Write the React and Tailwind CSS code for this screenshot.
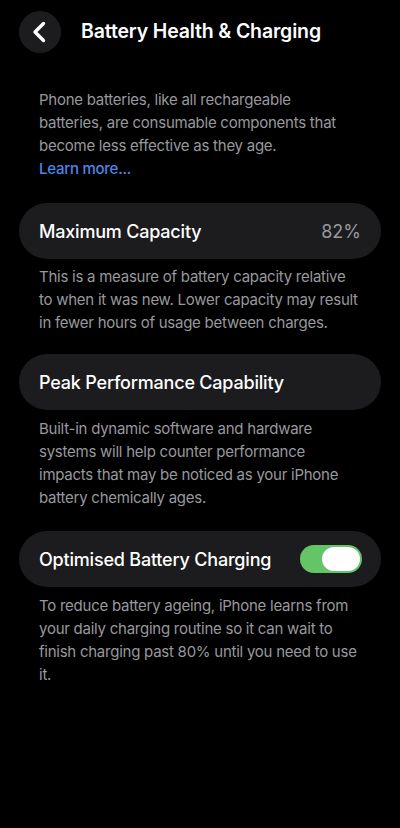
import React, { useState } from 'react';

function Toggle({ on, onChange }) {
  return (
    <button
      onClick={() => onChange(!on)}
      className={`w-[62px] h-[28px] rounded-full p-[2px] flex items-center ${on ? 'bg-[#65c466] justify-end' : 'bg-[#39393d] justify-start'}`}
    >
      <span className="block w-[38px] h-[24px] rounded-full bg-white" />
    </button>
  );
}

export default function App() {
  const [optimised, setOptimised] = useState(true);

  return (
    <div className="min-h-screen w-[400px] bg-black text-white font-['Inter','Liberation_Sans',sans-serif]">
      <div className="flex items-center h-[62px] px-[19px] pt-[1px]">
        <button className="w-[42px] h-[42px] rounded-full bg-[#1c1c1e] flex items-center justify-center">
          <svg width="24" height="24" viewBox="0 0 24 24" fill="none" stroke="white" strokeWidth="3.4" strokeLinecap="round" strokeLinejoin="round">
            <path d="M15.5 3.5 L7 12 L15.5 20.5" />
          </svg>
        </button>
        <h1 className="ml-[20px] text-[19.5px] font-semibold tracking-[-0.15px]">Battery Health &amp; Charging</h1>
      </div>

      <div className="px-[39px] pt-[26px] text-[15px] leading-[23px] tracking-[-0.25px] text-[#98989e]">
        <p className="w-[312px]">Phone batteries, like all rechargeable batteries, are consumable components that become less effective as they age.</p>
        <p className="text-[#4f86e8] font-medium">Learn more...</p>
      </div>

      <div className="px-[19px] pt-[23px]">
        <div className="h-[56px] rounded-[28px] bg-[#1c1c1e] flex items-center justify-between px-[20px]">
          <span className="text-[18px] font-medium tracking-[-0.2px]">Maximum Capacity</span>
          <span className="text-[18px] text-[#98989e]">82%</span>
        </div>
        <p className="px-[20px] pt-[6px] text-[15px] leading-[23px] tracking-[-0.25px] text-[#98989e]">
          This is a measure of battery capacity relative to when it was new. Lower capacity may result in fewer hours of usage between charges.
        </p>

        <div className="mt-[20px] h-[56px] rounded-[28px] bg-[#1c1c1e] flex items-center px-[20px]">
          <span className="text-[18px] font-medium tracking-[-0.2px]">Peak Performance Capability</span>
        </div>
        <p className="px-[20px] pt-[7px] text-[15px] leading-[23px] tracking-[-0.25px] text-[#98989e]">
          Built-in dynamic software and hardware systems will help counter performance impacts that may be noticed as your iPhone battery chemically ages.
        </p>

        <div className="mt-[22px] h-[56px] rounded-[28px] bg-[#1c1c1e] flex items-center justify-between pl-[20px] pr-[19px]">
          <span className="text-[18px] font-medium tracking-[-0.2px]">Optimised Battery Charging</span>
          <Toggle on={optimised} onChange={setOptimised} />
        </div>
        <p className="px-[20px] pt-[7px] text-[15px] leading-[23px] tracking-[-0.25px] text-[#98989e]">
          To reduce battery ageing, iPhone learns from your daily charging routine so it can wait to finish charging past 80% until you need to use it.
        </p>
      </div>
    </div>
  );
}
